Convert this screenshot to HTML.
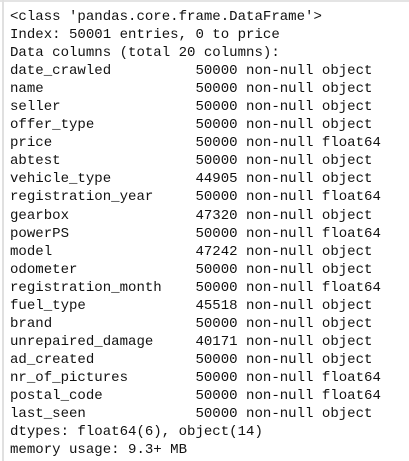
<!DOCTYPE html>
<html><head><style>
html,body{margin:0;padding:0;background:#fff;width:409px;height:461px;overflow:hidden}
.b{position:absolute;left:0;top:0;width:409px;height:2px;background:#e4e4e4}
.l{position:absolute;left:2px;top:0;width:2px;height:461px;background:#e0e0e0}
pre{position:absolute;left:10px;top:8px;margin:0;font-family:"Liberation Mono",monospace;font-size:14.05px;line-height:18.04px;color:#111}
</style></head><body><div class="b"></div><div class="l"></div><pre>&lt;class 'pandas.core.frame.DataFrame'&gt;
Index: 50001 entries, 0 to price
Data columns (total 20 columns):
date_crawled          50000 non-null object
name                  50000 non-null object
seller                50000 non-null object
offer_type            50000 non-null object
price                 50000 non-null float64
abtest                50000 non-null object
vehicle_type          44905 non-null object
registration_year     50000 non-null float64
gearbox               47320 non-null object
powerPS               50000 non-null float64
model                 47242 non-null object
odometer              50000 non-null object
registration_month    50000 non-null float64
fuel_type             45518 non-null object
brand                 50000 non-null object
unrepaired_damage     40171 non-null object
ad_created            50000 non-null object
nr_of_pictures        50000 non-null float64
postal_code           50000 non-null float64
last_seen             50000 non-null object
dtypes: float64(6), object(14)
memory usage: 9.3+ MB</pre></body></html>
